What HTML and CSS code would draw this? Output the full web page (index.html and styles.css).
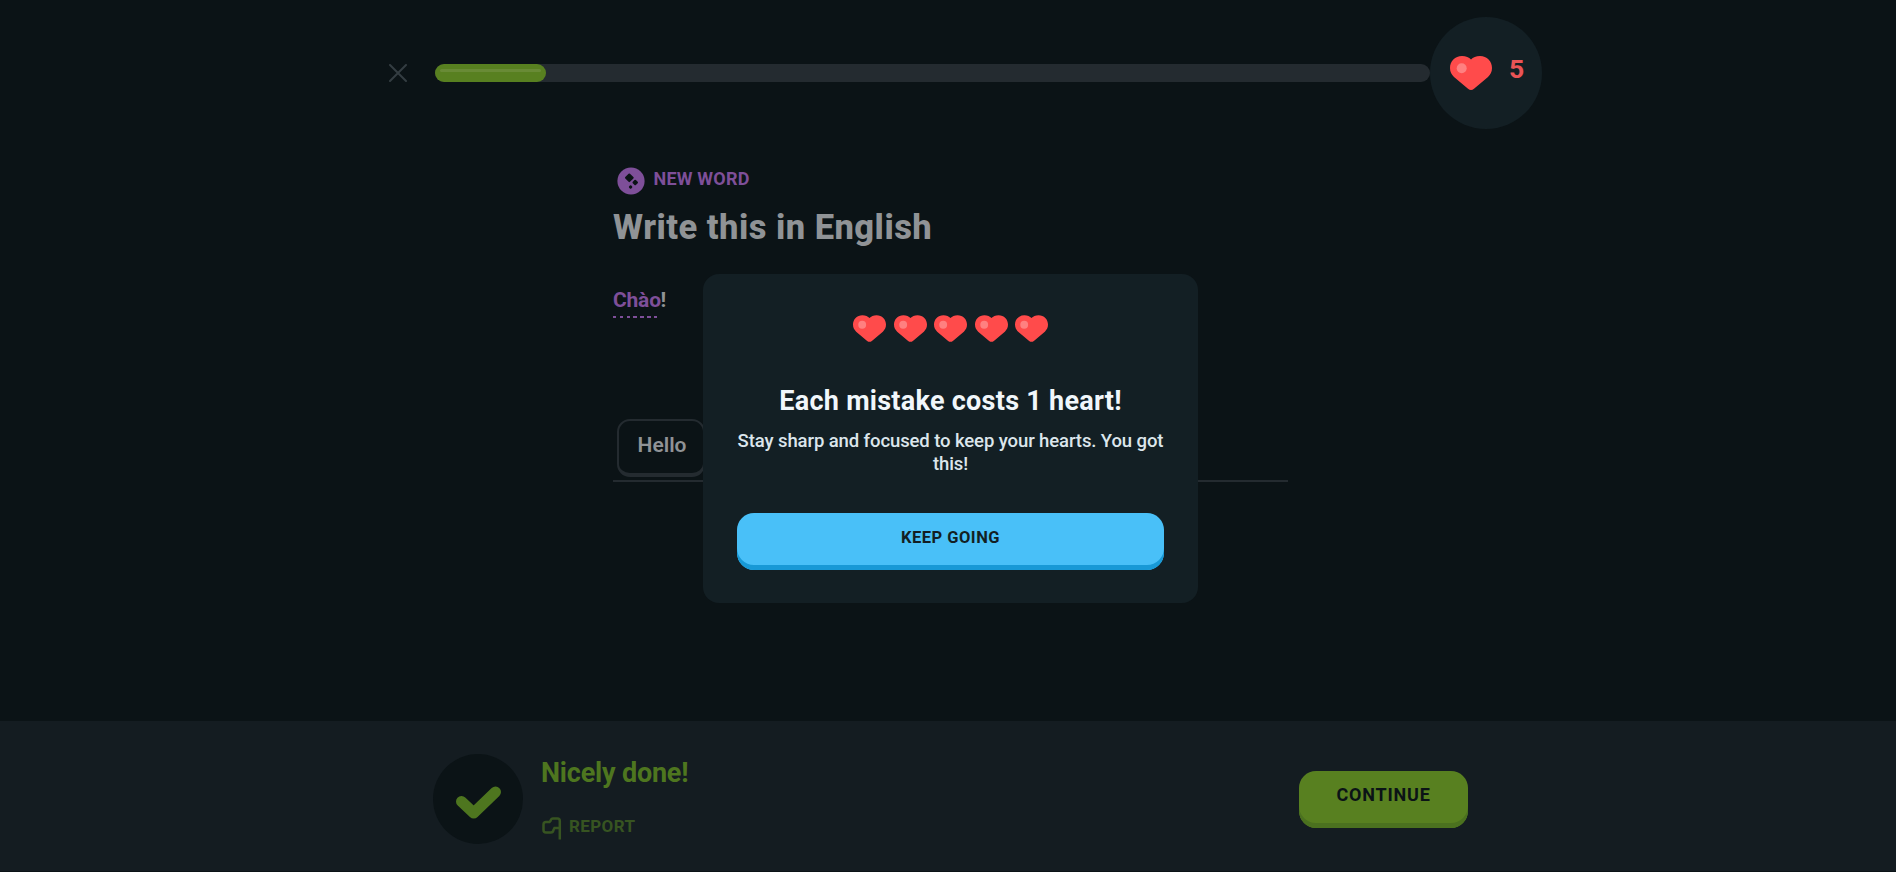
FILE: index.html
```html
<!DOCTYPE html>
<html lang="en">
<head>
<meta charset="utf-8">
<title>Lesson</title>
<link rel="stylesheet" href="styles.css">
</head>
<body>
<svg width="0" height="0" class="defs">
  <symbol id="heart" viewBox="0 0 42 34">
    <path d="M12 0C16 0 19 1.400 21 3.600C23 1.400 26 0 30 0C37 0 42 5.200 42 12C42 16 40.500 18.500 38 21L24 32.800C22 34.400 20 34.400 18 32.800L4 21C1.500 18.500 0 16 0 12C0 5.200 5 0 12 0Z" fill="#ff4b4b"/>
    <circle cx="11.700" cy="12.200" r="5" fill="#ff8080"/>
  </symbol>
</svg>
<div class="app">
  <header class="top">
    <svg class="close" viewBox="0 0 18 18"><path d="M1 1L17 17M17 1L1 17"/></svg>
    <div class="track"><div class="fill"><div class="shine"></div></div></div>
    <div class="lives"><svg class="life"><use href="#heart"/></svg><span class="count">5</span></div>
  </header>
  <main class="lesson">
    <div class="tag">
      <svg class="badge" viewBox="0 0 28 28"><circle cx="14" cy="14" r="13.600" fill="#7e4f99"/><g fill="#0b1316" stroke="#0b1316" stroke-width="2" stroke-linejoin="round"><path d="M12.300 7.500L15.700 10.800L12.300 14.100L9 10.800ZM18.200 13.800L20 15.500L18.200 17.200L16.500 15.500ZM13.600 19.300L14.300 20L13.600 20.700L12.900 20Z"/></g></svg>
      <span class="tag-text">NEW WORD</span>
    </div>
    <h1 class="prompt">Write this in English</h1>
    <p class="phrase"><span class="hint">Chào</span><span class="bang">!</span></p>
    <div class="answer"><button class="word">Hello</button></div>
  </main>
  <footer class="result">
    <div class="check"><svg viewBox="0 0 90 90"><path d="M28.500 47.500L40.700 59L62.500 38"/></svg></div>
    <div class="message">
      <h2 class="praise">Nicely done!</h2>
      <div class="report"><svg class="flag" viewBox="0 0 20 23"><path d="M17.800 22.500V4Q17.800 1.500 15.500 1.500H11Q9 1.500 8.500 4L7.500 5H4Q1.500 5 1.500 7.500V13Q1.500 15.500 4 15.500H9Q11 15.500 11.500 13L12.500 11H17"/></svg><span class="report-text">REPORT</span></div>
    </div>
    <button class="continue">CONTINUE</button>
  </footer>
  <div class="overlay">
    <section class="modal">
      <div class="hearts"><svg><use href="#heart"/></svg><svg><use href="#heart"/></svg><svg><use href="#heart"/></svg><svg><use href="#heart"/></svg><svg><use href="#heart"/></svg></div>
      <h2 class="title">Each mistake costs 1 heart!</h2>
      <p class="copy">Stay sharp and focused to keep your hearts. You got<br>this!</p>
      <button class="keep">KEEP GOING</button>
    </section>
  </div>
</div>
</body>
</html>
```
FILE: styles.css
```css
* { box-sizing: border-box; margin: 0; }
body { background: #0b1316; font-family: Roboto, "Liberation Sans", sans-serif; overflow: hidden; }
button { font-family: inherit; border: 0; padding: 0; }
span, h1, h2, button { white-space: nowrap; }
.defs { position: absolute; }
.app { position: relative; height: 872px; display: flex; flex-direction: column; }
.top { display: flex; align-items: center; height: 146px; padding-left: 389px; }
.close { width: 18px; height: 18px; margin-right: 28px; fill: none; stroke: #343d42; stroke-width: 2; stroke-linecap: round; }
.track { width: 995px; height: 18px; border-radius: 9px; background: #242b30; }
.fill { width: 111px; height: 18px; padding: 5px; border-radius: 9px; background: #588020; }
.shine { height: 3px; border-radius: 2px; background: #698b36; }
.lives { width: 112px; height: 112px; margin-left: -.5px; border-radius: 50%; background: #131f24; display: flex; align-items: center; padding-left: 20.500px; }
.life { width: 42px; height: 34px; }
.count { margin: -9px 0 0 17px; font-size: 26.500px; line-height: 32px; font-weight: 700; color: #ea5456; }
.lesson { width: 675px; margin-left: 613px; height: 575px; display: flex; flex-direction: column; }
.tag { display: flex; height: 28px; margin-top: 21px; padding-left: 4px; gap: 8.500px; }
.badge { width: 28px; height: 28px; }
.tag-text { font-size: 18px; line-height: 24px; font-weight: 700; color: #7e4f99; letter-spacing: .2px; }
.prompt { margin-top: 12px; font-size: 34.500px; line-height: 40px; font-weight: 800; color: #909396; letter-spacing: .47px; }
.phrase { margin-top: 41px; height: 32px; display: flex; font-size: 21px; line-height: 24px; font-weight: 700; color: #909396; }
.hint { height: 30px; width: 47.500px; color: #7e4f99; letter-spacing: -.2px; background: repeating-linear-gradient(90deg, #7e4f99 0 3.500px, transparent 3.500px 6.800px) 0 100% / 44px 2px no-repeat; }
.answer { height: 162px; padding: 99px 0 0 4px; border-bottom: 2px solid #242b30; }
.word { display: block; width: 88px; height: 58px; border: 2px solid #242b30; border-bottom-width: 4px; border-radius: 13px; background: transparent; color: #909396; font-size: 21px; font-weight: 600; padding: 0 0 4px 2px; }
.result { height: 150px; background: #141c21; display: flex; padding-left: 433px; }
.check { width: 90px; height: 90px; margin-top: 33px; border-radius: 50%; background: #0b1316; }
.check path { fill: none; stroke: #4e761f; stroke-width: 11; stroke-linecap: round; stroke-linejoin: round; }
.message { width: 758px; margin-left: 18px; padding-top: 36px; }
.praise { font-size: 27px; line-height: 32px; font-weight: 700; color: #4e761f; letter-spacing: -.2px; }
.report { display: flex; margin-top: 27px; }
.flag { width: 20px; height: 23px; margin: 1px 7.500px 0 .5px; fill: none; stroke: #375421; stroke-width: 2.500; }
.report-text { font-size: 17px; line-height: 20px; font-weight: 700; color: #375421; letter-spacing: .4px; }
.continue { width: 169px; height: 57px; margin-top: 50px; padding-bottom: 11px; border-radius: 17px; background: #588020; box-shadow: inset 0 -5px #4b711f; font-size: 18px; font-weight: 700; color: #0b1316; letter-spacing: .8px; }
.overlay { position: absolute; inset: 0; padding: 274px 0 0 703px; }
.modal { width: 495px; height: 329px; border-radius: 16px; background: #131f24; padding: 41px 34px 33px; text-align: center; }
.hearts { display: flex; justify-content: center; gap: 7.500px; height: 27px; }
.hearts svg { width: 33px; height: 27px; }
.title { margin-top: 43px; font-size: 27px; line-height: 32px; font-weight: 700; color: #f1f7fb; letter-spacing: .27px; }
.copy { margin: 13px -10px 0; font-size: 18.500px; line-height: 23px; font-weight: 500; color: #dce6ec; letter-spacing: -.1px; }
.keep { display: block; width: 427px; height: 57px; margin-top: 37px; padding-bottom: 9px; border-radius: 17px; background: #49c0f8; box-shadow: inset 0 -5px #1899d6; font-size: 16.500px; font-weight: 700; color: #131f24; letter-spacing: .5px; }
```
